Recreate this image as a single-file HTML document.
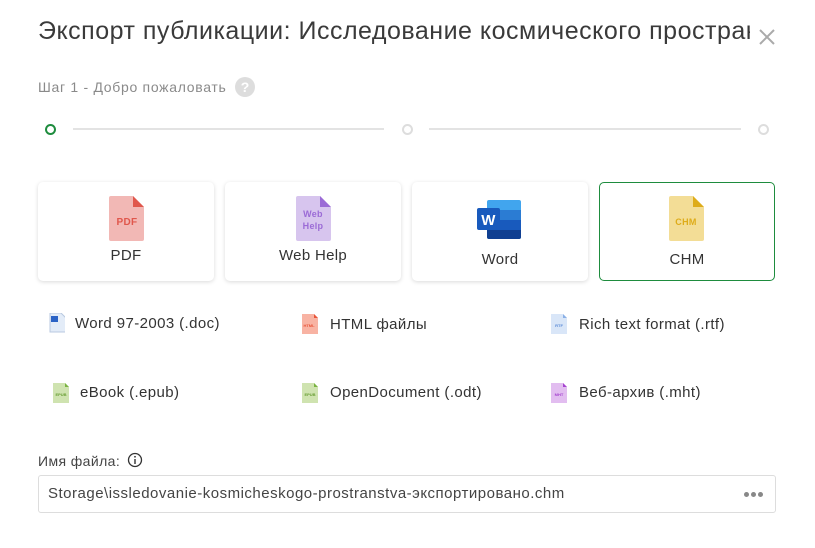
<!DOCTYPE html><html><head><meta charset="utf-8"><style>
body{margin:0;width:815px;height:548px;background:#fff;font-family:"Liberation Sans",sans-serif;position:relative;overflow:hidden;color:#333}
.a{position:absolute}
.title{left:38px;top:17px;font-size:25px;letter-spacing:0.5px;color:#3a3a3a;white-space:nowrap;width:712px;overflow:hidden}
.card{position:absolute;top:182px;width:176px;height:99px;border-radius:5px;box-shadow:0 1px 4px rgba(0,0,0,.15);background:#fff;text-align:center;font-size:15px;letter-spacing:0.3px;color:#333}
.card .lbl{position:absolute;left:0;right:0}
.it{position:absolute;font-size:15px;letter-spacing:0.4px;color:#333;white-space:nowrap}
.ic{position:absolute;width:16px;height:20px}
.d{display:inline-block;width:5px;height:5px;border-radius:50%;background:#888;margin-right:2px}
</style></head><body>
<div class="a title">Экспорт публикации: Исследование космического пространства</div>
<svg class="a" style="left:758px;top:28px" width="18" height="18"><path d="M2 2L16 16M16 2L2 16" stroke="#aaa" stroke-width="2"/></svg>
<div class="a" style="left:38px;top:79px;font-size:14px;letter-spacing:0.7px;color:#8a8a8a">Шаг 1 - Добро пожаловать</div>
<div class="a" style="left:235px;top:77px;width:20px;height:20px;border-radius:50%;background:#ddd;color:#fff;font-weight:bold;font-size:14px;text-align:center;line-height:20px">?</div>
<div class="a" style="left:45px;top:124px;width:7px;height:7px;border:2px solid #1e8c3e;border-radius:50%"></div>
<div class="a" style="left:73px;top:128px;width:311px;height:2px;background:#e3e3e3"></div>
<div class="a" style="left:402px;top:124px;width:7px;height:7px;border:2px solid #ddd;border-radius:50%"></div>
<div class="a" style="left:429px;top:128px;width:312px;height:2px;background:#e3e3e3"></div>
<div class="a" style="left:758px;top:124px;width:7px;height:7px;border:2px solid #ddd;border-radius:50%"></div>

<div class="card" style="left:38px"><svg class="a" style="left:71px;top:14px" width="36" height="46"><path d="M2 0H24L35 11V43Q35 45 33 45H2Q0 45 0 43V2Q0 0 2 0Z" fill="#f2b8b5"/><path d="M24 0L35 11H24Z" fill="#e0574c"/><text x="18" y="29" font-size="10" font-weight="bold" fill="#e0574c" text-anchor="middle" font-family="Liberation Sans">PDF</text></svg><div class="lbl" style="top:65px">PDF</div></div>
<div class="card" style="left:225px"><svg class="a" style="left:71px;top:14px" width="36" height="46"><path d="M2 0H24L35 11V43Q35 45 33 45H2Q0 45 0 43V2Q0 0 2 0Z" fill="#d7c5ee"/><path d="M24 0L35 11H24Z" fill="#9b6bd6"/><text x="17" y="21" font-size="9" font-weight="bold" fill="#9b6bd6" text-anchor="middle" font-family="Liberation Sans">Web</text><text x="17" y="33" font-size="9" font-weight="bold" fill="#9b6bd6" text-anchor="middle" font-family="Liberation Sans">Help</text></svg><div class="lbl" style="top:65px">Web Help</div></div>
<div class="card" style="left:412px"><svg class="a" style="left:65px;top:16px" width="46" height="44"><rect x="10" y="2" width="34" height="39" rx="2" fill="#41a5ee"/><rect x="10" y="12" width="34" height="10" fill="#2b7cd3"/><rect x="10" y="22" width="34" height="10" fill="#185abd"/><path d="M10 32H44V39Q44 41 42 41H12Q10 41 10 39Z" fill="#103f91"/><rect x="0" y="10" width="23" height="22" rx="2" fill="#185abd"/><text x="11.5" y="27" font-size="15" font-weight="bold" fill="#fff" text-anchor="middle" font-family="Liberation Sans">W</text></svg><div class="lbl" style="top:69px">Word</div></div>
<div class="card" style="left:599px;border:1px solid #1e8c3e;width:174px;height:97px;box-shadow:none"><svg class="a" style="left:69px;top:13px" width="36" height="46"><path d="M2 0H24L35 11V43Q35 45 33 45H2Q0 45 0 43V2Q0 0 2 0Z" fill="#f3dd96"/><path d="M24 0L35 11H24Z" fill="#deac1a"/><text x="17" y="29" font-size="9" font-weight="bold" fill="#deac1a" text-anchor="middle" font-family="Liberation Sans">CHM</text></svg><div class="lbl" style="top:68px">CHM</div></div>

<svg class="ic" style="left:49px;top:313px" width="18" height="20"><path d="M1 0H12L17 5V19H1Z" fill="#e3ecf8" stroke="#b9c9e0"/><rect x="2" y="3" width="7" height="6" fill="#2b63c6"/></svg>
<div class="it" style="left:75px;top:315px">Word 97-2003 (.doc)</div>
<svg class="ic" style="left:302px;top:314px"><path d="M0 0H12L16 4V20H0Z" fill="#f8b3a3"/><path d="M12 0L16 4H12Z" fill="#e8553a"/><text x="7" y="13" font-size="4" fill="#e8553a" text-anchor="middle" font-family="Liberation Sans" font-weight="bold">HTML</text></svg>
<div class="it" style="left:330px;top:316px">HTML файлы</div>
<svg class="ic" style="left:551px;top:314px"><path d="M0 0H12L16 4V20H0Z" fill="#d9e6f8"/><path d="M12 0L16 4H12Z" fill="#8ab0e6"/><text x="8" y="13" font-size="4" fill="#5b8bd6" text-anchor="middle" font-family="Liberation Sans" font-weight="bold">RTF</text></svg>
<div class="it" style="left:579px;top:316px">Rich text format (.rtf)</div>

<svg class="ic" style="left:53px;top:383px"><path d="M0 0H12L16 4V20H0Z" fill="#cfe3b0"/><path d="M12 0L16 4H12Z" fill="#7bb342"/><text x="8" y="13" font-size="4" fill="#6a9f36" text-anchor="middle" font-family="Liberation Sans" font-weight="bold">EPUB</text></svg>
<div class="it" style="left:80px;top:384px">eBook (.epub)</div>
<svg class="ic" style="left:302px;top:383px"><path d="M0 0H12L16 4V20H0Z" fill="#cfe3b0"/><path d="M12 0L16 4H12Z" fill="#7bb342"/><text x="8" y="13" font-size="4" fill="#6a9f36" text-anchor="middle" font-family="Liberation Sans" font-weight="bold">EPUB</text></svg>
<div class="it" style="left:330px;top:384px">OpenDocument (.odt)</div>
<svg class="ic" style="left:551px;top:383px"><path d="M0 0H12L16 4V20H0Z" fill="#e2bdf0"/><path d="M12 0L16 4H12Z" fill="#a644d0"/><text x="8" y="13" font-size="4" fill="#a644d0" text-anchor="middle" font-family="Liberation Sans" font-weight="bold">MHT</text></svg>
<div class="it" style="left:579px;top:384px">Веб-архив (.mht)</div>

<div class="a" style="left:38px;top:453px;font-size:14px;letter-spacing:0.4px;color:#444">Имя файла:</div>
<svg class="a" style="left:127px;top:452px" width="16" height="16"><circle cx="8" cy="8" r="6.5" fill="none" stroke="#333" stroke-width="1.3"/><rect x="7.3" y="7" width="1.4" height="5" fill="#333"/><circle cx="8" cy="4.8" r=".9" fill="#333"/></svg>
<div class="a" style="left:38px;top:475px;width:736px;height:36px;border:1px solid #ddd;border-radius:3px"></div>
<div class="a" style="left:48px;top:485px;font-size:15px;letter-spacing:0.5px;color:#444">Storage\issledovanie-kosmicheskogo-prostranstva-экспортировано.chm</div>
<div class="a" style="left:744px;top:492px;height:5px;line-height:0;display:flex"><span class="d"></span><span class="d"></span><span class="d"></span></div>
</body></html>
